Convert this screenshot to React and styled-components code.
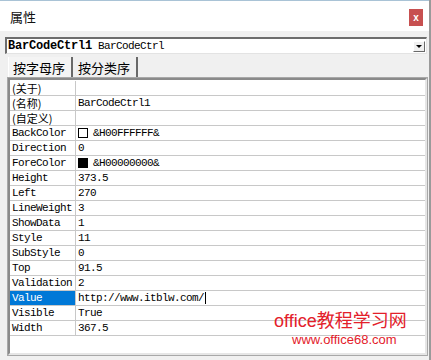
import React from "react";
import styled, { createGlobalStyle } from "styled-components";

const Global = createGlobalStyle`
  html, body { margin: 0; padding: 0; background: #f0f0f0; }
  body { font-family: "Liberation Mono", "Noto Sans CJK SC", monospace; }
`;

const Window = styled.div`
  position: relative;
  width: 431px;
  height: 360px;
  box-sizing: border-box;
  background: #f0f0f0;
  display: flex;
  flex-direction: column;
  overflow: hidden;
  border-right: 2px solid #9a9a9a;
`;

const TitleBar = styled.div`
  height: 31px;
  box-sizing: border-box;
  background: #ffffff;
  border-top: 1px solid #a9c3d6;
  display: flex;
  align-items: center;
  justify-content: space-between;
  padding: 0 6px 0 10px;
`;

const Title = styled.span`
  font-family: "Noto Sans CJK SC", sans-serif;
  font-size: 13px;
  color: #111;
`;

const Close = styled.div`
  width: 14px;
  height: 17px;
  margin-top: 3px;
  background: #c75050;
  color: #fff;
  font-family: "Liberation Sans", sans-serif;
  font-size: 10px;
  font-weight: bold;
  display: flex;
  align-items: center;
  justify-content: center;
`;

const Content = styled.div`
  flex: 1;
  display: flex;
  flex-direction: column;
  padding: 6px 2px 0 5px;
  min-height: 0;
`;

const Combo = styled.div`
  height: 17px;
  box-sizing: border-box;
  background: #fff;
  border-top: 2px solid #6d6d6d;
  border-left: 2px solid #6d6d6d;
  border-bottom: 1px solid #e3e3e3;
  border-right: 1px solid #e3e3e3;
  display: flex;
  align-items: center;
  padding-left: 1px;
  color: #000;
`;

const ComboBold = styled.span`
  font-size: 12px;
  font-weight: bold;
  letter-spacing: -0.2px;
  margin-right: 6px;
`;

const ComboText = styled.span`
  font-size: 11px;
  letter-spacing: -0.6px;
`;

const DropButton = styled.div`
  margin-left: auto;
  margin-right: 1px;
  width: 12px;
  height: 11px;
  box-sizing: border-box;
  background: #f0f0f0;
  border-top: 1px solid #fff;
  border-left: 1px solid #fff;
  border-right: 1px solid #696969;
  border-bottom: 1px solid #696969;
  display: flex;
  align-items: center;
  justify-content: center;
  &::after {
    content: "";
    border-left: 3px solid transparent;
    border-right: 3px solid transparent;
    border-top: 3px solid #000;
    margin-top: 1px;
  }
`;

const Tabs = styled.div`
  height: 24px;
  display: flex;
  align-items: flex-end;
  padding-left: 3px;
`;

const Tab = styled.div`
  height: 21px;
  box-sizing: border-box;
  padding: 0 6px 0 4px;
  display: flex;
  align-items: center;
  font-family: "Noto Sans CJK SC", sans-serif;
  font-size: 13px;
  color: #000;
  border-left: 1px solid ${(p) => (p.$active ? "#fff" : "transparent")};
  border-right: 2px solid #696969;
  background: ${(p) => (p.$active ? "#f4f4f4" : "#f0f0f0")};
`;

const Grid = styled.div`
  flex: 1;
  margin: 0 0 5px 3px;
  background: #fff;
  border-top: 2px solid #8a8a8a;
  border-left: 2px solid #8a8a8a;
  border-right: 2px solid #e6e6e6;
  border-bottom: 2px solid #e6e6e6;
  box-shadow: 0 0 0 1px #a8a8a8;
  padding-top: 1px;
  position: relative;
`;

const Row = styled.div`
  display: grid;
  grid-template-columns: 66px 1fr;
  height: 15px;
  box-sizing: border-box;
  border-bottom: 1px solid #c8c8c8;
`;

const NameCell = styled.div`
  box-sizing: border-box;
  border-right: 1px solid #c8c8c8;
  padding-left: 2px;
  display: flex;
  align-items: center;
  font-size: 11px;
  letter-spacing: ${(p) => (p.$cjk ? "0" : "-0.6px")};
  line-height: 14px;
  white-space: nowrap;
  color: ${(p) => (p.$selected ? "#fff" : "#000")};
  background: ${(p) => (p.$selected ? "#0078d7" : "transparent")};
  font-family: ${(p) =>
    p.$cjk ? '"Noto Sans CJK SC", sans-serif' : '"Liberation Mono", monospace'};
`;

const ValueCell = styled.div`
  padding-left: 2px;
  font-size: 11px;
  letter-spacing: -0.6px;
  line-height: 14px;
  color: #000;
  display: flex;
  align-items: center;
  white-space: nowrap;
`;

const Swatch = styled.span`
  width: 10px;
  height: 10px;
  box-sizing: border-box;
  border: 1px solid #000;
  background: ${(p) => p.$color};
  margin-right: 5px;
  flex-shrink: 0;
`;

const Caret = styled.span`
  width: 1px;
  height: 12px;
  background: #000;
  margin-left: 1px;
`;

const Watermark = styled.div`
  position: absolute;
  left: 274px;
  top: 309px;
  display: flex;
  flex-direction: column;
  align-items: center;
  color: #e3202a;
  font-family: "Liberation Sans", "Noto Sans CJK SC", sans-serif;
  pointer-events: none;
`;

const WmMain = styled.span`
  font-size: 18px;
  line-height: 24px;
`;

const WmUrl = styled.span`
  font-size: 13px;
  line-height: 14px;
  margin-left: 8px;
`;

const rows = [
  { name: "(关于)", cjk: true, value: "" },
  { name: "(名称)", cjk: true, value: "BarCodeCtrl1" },
  { name: "(自定义)", cjk: true, value: "" },
  { name: "BackColor", value: "&H00FFFFFF&", swatch: "#fff" },
  { name: "Direction", value: "0" },
  { name: "ForeColor", value: "&H00000000&", swatch: "#000" },
  { name: "Height", value: "373.5" },
  { name: "Left", value: "270" },
  { name: "LineWeight", value: "3" },
  { name: "ShowData", value: "1" },
  { name: "Style", value: "11" },
  { name: "SubStyle", value: "0" },
  { name: "Top", value: "91.5" },
  { name: "Validation", value: "2" },
  { name: "Value", value: "http://www.itblw.com/", selected: true },
  { name: "Visible", value: "True" },
  { name: "Width", value: "367.5" },
];

export default function App() {
  return (
    <>
      <Global />
      <Window>
        <TitleBar>
          <Title>属性</Title>
          <Close>x</Close>
        </TitleBar>
        <Content>
          <Combo>
            <ComboBold>BarCodeCtrl1</ComboBold>
            <ComboText>BarCodeCtrl</ComboText>
            <DropButton />
          </Combo>
          <Tabs>
            <Tab $active>按字母序</Tab>
            <Tab>按分类序</Tab>
          </Tabs>
          <Grid>
            {rows.map((r) => (
              <Row key={r.name}>
                <NameCell $cjk={r.cjk} $selected={r.selected}>
                  {r.name}
                </NameCell>
                <ValueCell>
                  {r.swatch && <Swatch $color={r.swatch} />}
                  {r.value}
                  {r.selected && <Caret />}
                </ValueCell>
              </Row>
            ))}
          </Grid>
        </Content>
        <Watermark>
          <WmMain>office教程学习网</WmMain>
          <WmUrl>www.office68.com</WmUrl>
        </Watermark>
      </Window>
    </>
  );
}
